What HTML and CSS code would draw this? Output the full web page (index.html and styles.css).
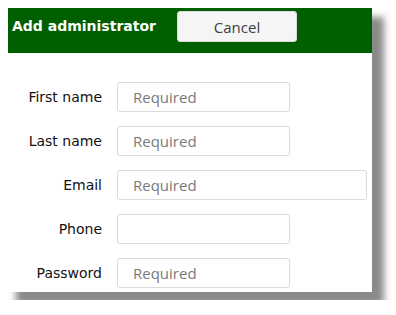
FILE: index.html
```html
<!DOCTYPE html>
<html>
<head>
<meta charset="utf-8">
<link rel="stylesheet" href="styles.css">
</head>
<body>
<div class="panel">
  <div class="header">
    <span class="title">Add administrator</span>
    <button class="cancel">Cancel</button>
  </div>
  <form class="form">
    <label class="label">First name</label>
    <input class="field" placeholder="Required">
    <label class="label">Last name</label>
    <input class="field" placeholder="Required">
    <label class="label">Email</label>
    <input class="field wide" placeholder="Required">
    <label class="label">Phone</label>
    <input class="field">
    <label class="label">Password</label>
    <input class="field" type="password" placeholder="Required">
  </form>
</div>
</body>
</html>
```
FILE: styles.css
```css
html, body {
  margin: 0;
  padding: 0;
  background: #fff;
}
.panel {
  margin: 8px;
  width: 364px;
  height: 284px;
  background: #fff;
  box-shadow: 10px 11px 7px 2px #8a8a8a;
  box-sizing: border-box;
}
.header {
  height: 45px;
  background: #005f00;
  display: flex;
  align-items: flex-start;
  box-sizing: border-box;
  padding: 3px 0 0 4px;
}
.title {
  font-family: "DejaVu Sans", Verdana, sans-serif;
  font-weight: bold;
  font-size: 14px;
  color: #fff;
  line-height: 31px;
  width: 165px;
}
.cancel {
  width: 120px;
  height: 31px;
  background: #f5f5f5;
  border: 1px solid #dcdcdc;
  border-radius: 3px;
  font-family: "Open Sans", sans-serif;
  font-size: 15px;
  color: #3a3f48;
  padding: 0;
  margin: 0;
}
.form {
  display: grid;
  grid-template-columns: 94px auto;
  column-gap: 15px;
  row-gap: 14px;
  padding-top: 29px;
  align-items: center;
  justify-items: start;
  margin: 0;
}
.label {
  justify-self: end;
  font-family: "DejaVu Sans", Verdana, sans-serif;
  font-size: 14px;
  color: #111;
}
.field {
  width: 173px;
  height: 30px;
  box-sizing: border-box;
  border: 1px solid #dadada;
  border-radius: 3px;
  padding: 0 0 0 15px;
  font-family: "Open Sans", sans-serif;
  font-size: 15px;
  color: #333;
  margin: 0;
  outline: none;
}
.field.wide {
  width: 250px;
}
.field::placeholder {
  color: #7a7a7a;
}
```
